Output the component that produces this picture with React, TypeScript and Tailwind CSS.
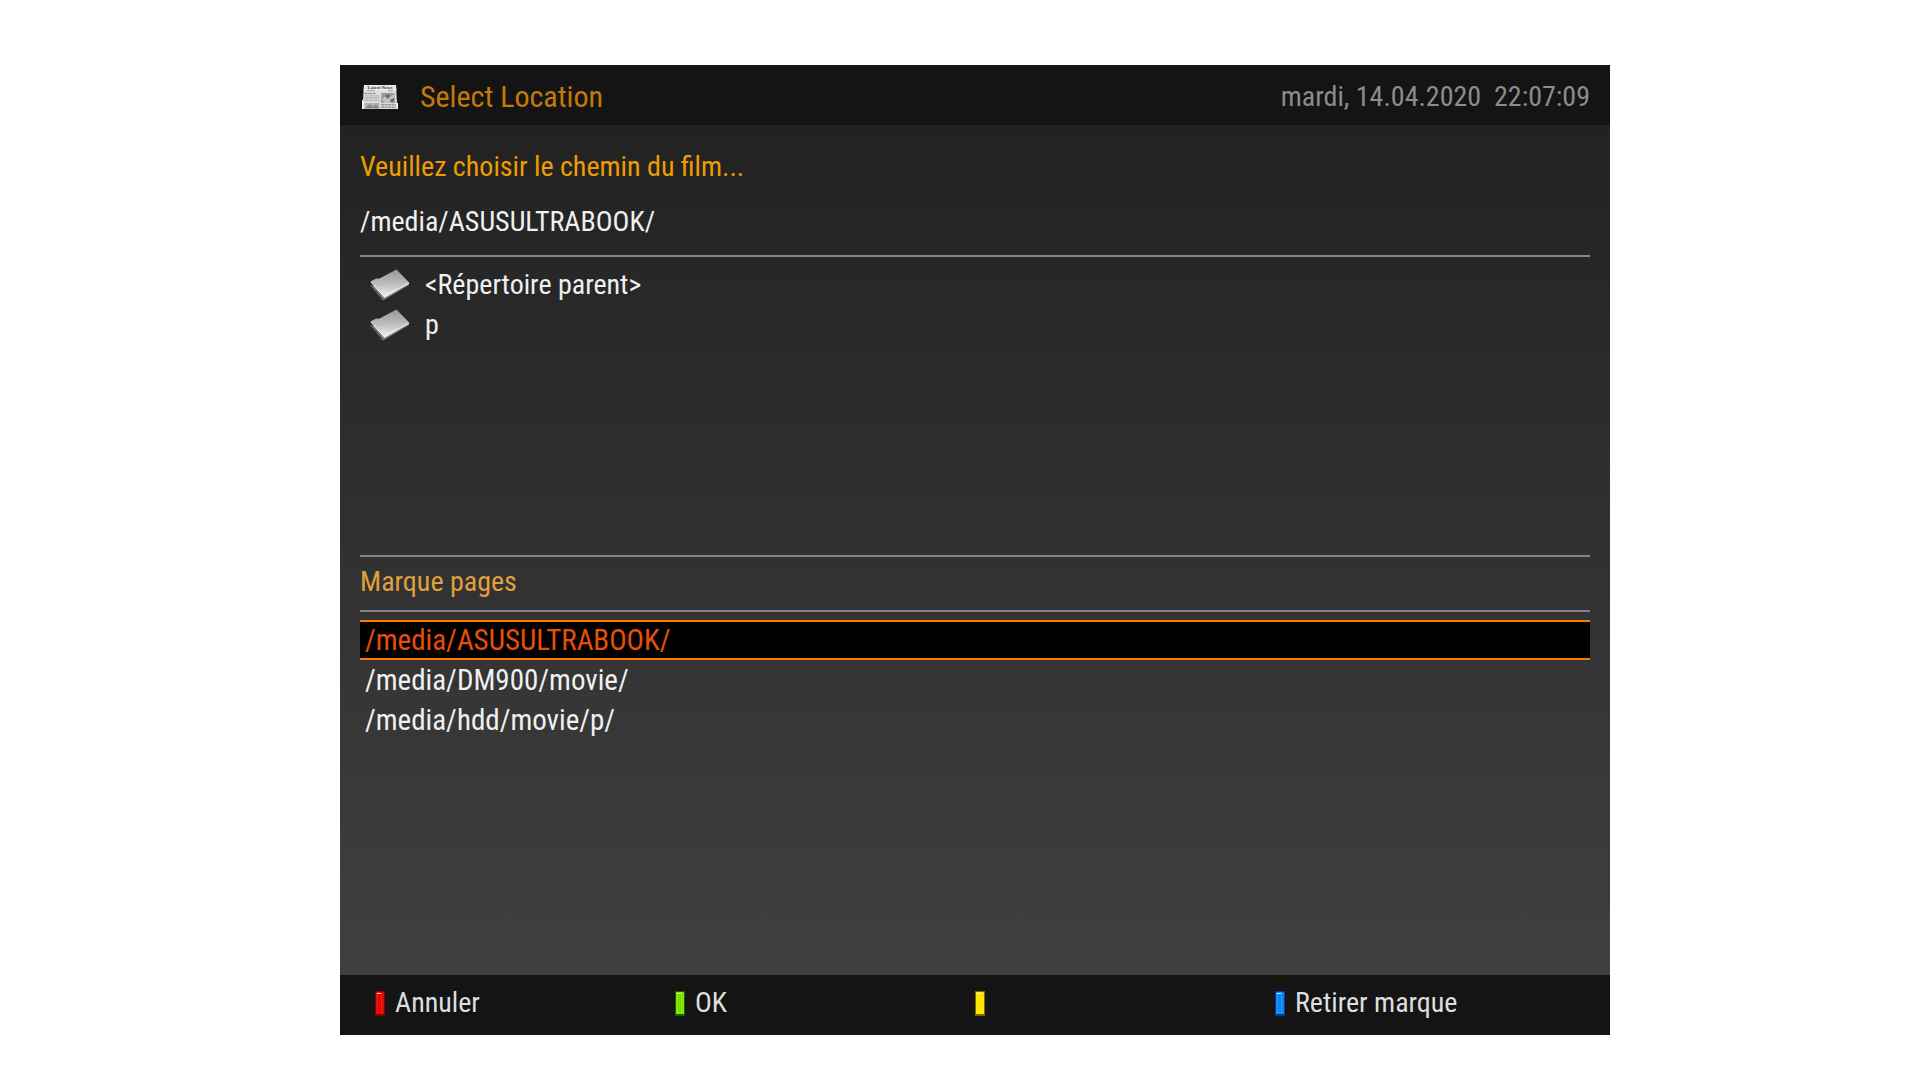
const bookmarks = ["/media/ASUSULTRABOOK/", "/media/DM900/movie/", "/media/hdd/movie/p/"];

const folders = ["<Répertoire parent>", "p"];

const keys = [
  { name: "Rouge", label: "Annuler", edge: "#8a0000", fill: "#e60a05", mid: "#ff2a20", inner: "#a80000" },
  { name: "Vert", label: "OK", edge: "#1c5c00", fill: "#7ee600", mid: "#9cff10", inner: "#4fa800" },
  { name: "Jaune", label: "", edge: "#7d6400", fill: "#ffe600", mid: "#fff000", inner: "#ffd800" },
  { name: "Bleu", label: "Retirer marque", edge: "#003a94", fill: "#0a86f5", mid: "#30a8ff", inner: "#0068d0" },
];

function NewsIcon() {
  return (
    <svg width="36" height="24" viewBox="0 0 36 24" aria-hidden="true">
      <path d="M2 0h32l1 18h1v6H0v-9h1z" fill="#dcdcdc" />
      <path d="M2 0h32l.4 6H1.6z" fill="#e8e8e8" />
      <path d="M0 16h1.5v8H0zM34.5 18H36v6h-1.5z" fill="#f8f8f8" />
      <text x="18" y="4.4" textAnchor="middle" fontSize="4.8" fontWeight="700" fontFamily="Liberation Serif, serif" fill="#333">
        Latest News
      </text>
      <path d="M5 5.6h8M26 5.6h5" stroke="#777" strokeWidth=".6" />
      <path d="M3 8.6h11" stroke="#777" strokeWidth="1" strokeDasharray="2 .7" />
      <path d="M2.5 10.8h15M2.5 12.4h15M2.5 14h15M2.5 15.6h15" stroke="#aaa" strokeWidth=".8" strokeDasharray="4 .5" />
      <path d="M19.5 8h13l.5 10H19z" fill="#999" />
      <path d="M20 14l5-4 3 2 4-3v4l-4 5h-6z" fill="#c0c0c0" />
      <path d="M23 11l3-2 2 2-2 3zM28 15l4-2v3l-3 1z" fill="#666" />
      <path d="M2.5 18h15v6h-15z" fill="#b4b4b4" />
      <path d="M3 23l5-4 3 3 3-3 3 4z" fill="#858585" />
      <path d="M19 19.5h15M19 21h15M19 22.5h15" stroke="#888" strokeWidth=".8" strokeDasharray="3 .5" />
    </svg>
  );
}

function FolderIcon() {
  return (
    <svg width="40" height="32" viewBox="0 0 40 32" className="shrink-0" aria-hidden="true">
      <defs>
        <linearGradient id="folder" x1="0" y1="0" x2="0" y2="1">
          <stop offset="0" stopColor="#969696" />
          <stop offset=".55" stopColor="#c0c0c0" />
          <stop offset="1" stopColor="#f4f4f4" />
        </linearGradient>
      </defs>
      <path d="M0 16l13 15.5L39 16v-2L20 20z" fill="#888" />
      <path d="M0 15l13.5 15.5" fill="none" stroke="#444" strokeWidth="1" />
      <path d="M.5 12.5L6 9.5l3 .3L26.5.5 39.5 14 14.5 28.5z" fill="url(#folder)" />
      <path d="M1 13l13.5 15 24.5-14" fill="none" stroke="#f8f8f8" strokeWidth="1" />
    </svg>
  );
}

function Rule() {
  return <hr className="h-0.5 border-0 bg-[#848490]" />;
}

export default function App() {
  return (
    <div className="min-h-screen bg-white pt-[65px] pr-[310px] pb-[45px] pl-[340px] font-['Roboto_Condensed','Roboto',sans-serif] text-[28px] leading-10 text-[#f0f0f0]">
      <div className="flex flex-col">
        <header className="flex h-[60px] items-center justify-between bg-[#141414] px-5 pt-1">
          <div className="flex items-center gap-[22px] pl-0.5">
            <NewsIcon />
            <h1 className="text-[30px] text-[#c47a08]">Select Location</h1>
          </div>
          <time className="whitespace-pre text-[#8c8c8c]">mardi, 14.04.2020  22:07:09</time>
        </header>

        <main className="bg-linear-to-b from-[#222222] to-[#404040] px-5">
          <h2 className="pt-[22px] text-[#f09c00]">Veuillez choisir le chemin du film...</h2>
          <p className="pt-[15px] pb-[13px]">/media/ASUSULTRABOOK/</p>
          <Rule />
          <ul className="min-h-[298px] pt-2">
            {folders.map((f) => (
              <li key={f}>
                <button className="flex h-10 w-full items-center gap-[15px] pl-2.5 text-left">
                  <FolderIcon />
                  {f}
                </button>
              </li>
            ))}
          </ul>

          {/* Bookmarks */}
          <Rule />
          <h2 className="pt-[5px] pb-2 text-[#e0a03c]">Marque pages</h2>
          <Rule />
          <ul className="min-h-[363px] pt-2 text-[29px]">
            {bookmarks.map((b, i) => (
              <li key={b}>
                <button
                  className={
                    i === 0
                      ? "flex h-10 w-full items-center border-y-2 border-[#ff7800] bg-black px-[5px] text-[#e65005]"
                      : "flex h-10 w-full items-center px-[5px]"
                  }
                >
                  {b}
                </button>
              </li>
            ))}
          </ul>
        </main>

        <footer className="flex h-[60px] bg-[#141414] pl-[35px] text-[#dedede]">
          {keys.map((k) => (
            <button key={k.name} aria-label={k.label || k.name} className="flex w-[300px] items-center gap-2.5 pb-1">
              <svg width="10" height="25" viewBox="0 0 10 25" aria-hidden="true">
                <rect width="10" height="25" fill={k.edge} />
                <rect x="1" y="1" width="8" height="22" fill={k.fill} />
                <rect x="2" y="2" width="5" height="20" fill={k.mid} />
                <rect x="3" y="3" width="3" height="18" fill={k.fill} stroke={k.inner} strokeWidth=".5" />
                <rect x="2" y="2" width="4" height="1" fill="#fff" opacity=".8" />
              </svg>
              {k.label}
            </button>
          ))}
        </footer>
      </div>
    </div>
  );
}
